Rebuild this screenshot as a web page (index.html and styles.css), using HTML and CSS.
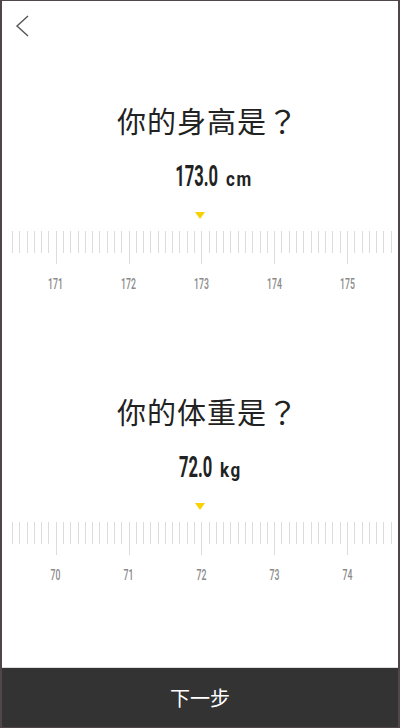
FILE: index.html
```html
<!DOCTYPE html>
<html>
<head>
    <meta charset="utf-8"/>
    <title>身体数据</title>

    <link rel="stylesheet" href="styles.css">
</head>
<body>

<div class="screen">
    <div class="header">
        <svg class="back" width="16" height="22" viewBox="0 0 16 22">
            <polyline points="13,1 2,11 13,21" fill="none" stroke="#555" stroke-width="1.4"/>
        </svg>
    </div>

    <div class="section">
        <div class="title">你的身高是<span class="mark">？</span></div>
        <div class="value"><span class="num">173.0</span><span class="unit">cm</span></div>
        <div class="pointer"></div>
        <div class="ruler" id="heightRuler"></div>
        <ul class="scale">
            <li>171</li>
            <li>172</li>
            <li>173</li>
            <li>174</li>
            <li>175</li>
        </ul>
    </div>

    <div class="section">
        <div class="title">你的体重是<span class="mark">？</span></div>
        <div class="value"><span class="num">72.0</span><span class="unit">kg</span></div>
        <div class="pointer"></div>
        <div class="ruler" id="weightRuler"></div>
        <ul class="scale">
            <li>70</li>
            <li>71</li>
            <li>72</li>
            <li>73</li>
            <li>74</li>
        </ul>
    </div>

    <div class="footer">下一步</div>
</div>

<script>
    // 刻度尺：每格 0.1，整数处为长刻度
    function drawTicks(id) {
        var ruler = document.getElementById(id);
        var html = '';
        for (var i = 0; i < 53; i++) {
            html += '<span class="tick' + (i % 10 == 6 ? ' major' : '') + '"></span>';
        }
        ruler.innerHTML = html;
    }

    drawTicks('heightRuler');
    drawTicks('weightRuler');
</script>
</body>
</html>
```

FILE: styles.css
```css
html, body {
    margin: 0;
    padding: 0;
}

body {
    background: #fff;
    font-family: "Noto Sans CJK SC", sans-serif;
}

.screen {
    width: 400px;
    height: 728px;
    box-sizing: border-box;
    border: 2px solid #4f4747;
    border-top-width: 1px;
    border-bottom-width: 1px;
    display: flex;
    flex-direction: column;
}

.header {
    height: 99px;
    box-sizing: border-box;
    padding: 14px 0 0 13px;
}

.back {
    display: block;
}

.section + .section {
    margin-top: 99px;
}

.title {
    font-size: 29px;
    line-height: 40px;
    letter-spacing: 1px;
    padding-left: 16px;
    text-align: center;
    color: #222;
}

.title .mark {
    font-family: "Noto Sans CJK JP", sans-serif;
    font-size: 31px;
}

.value {
    display: flex;
    justify-content: center;
    align-items: baseline;
    height: 30px;
    line-height: 30px;
    margin-top: 21px;
    color: #222;
    font-family: Roboto, sans-serif;
    font-weight: bold;
}

.num {
    display: inline-block;
    font-size: 29px;
    transform: scaleX(.57);
    transform-origin: right;
}

.unit {
    display: inline-block;
    font-size: 20px;
    letter-spacing: 2px;
    margin-left: 8px;
    transform: scaleX(.85);
    transform-origin: left;
}

.pointer {
    width: 0;
    height: 0;
    margin: 21px auto 0;
    border-left: 5px solid transparent;
    border-right: 5px solid transparent;
    border-top: 7px solid #f7d100;
}

.ruler {
    display: flex;
    justify-content: space-between;
    align-items: flex-start;
    width: 380px;
    height: 33px;
    margin: 12px 0 0 10px;
}

.tick {
    width: 1px;
    height: 22px;
    background: #dcdcdc;
}

.tick.major {
    height: 33px;
}

.scale {
    display: flex;
    list-style: none;
    padding: 0;
    margin: 12px 0 0 17px;
}

.scale li {
    width: 72.9px;
    text-align: center;
    font-family: Roboto, sans-serif;
    font-weight: 500;
    font-size: 14px;
    line-height: 16px;
    color: #8a8a8a;
    transform: scaleX(.62);
}

.footer {
    margin-top: auto;
    height: 59px;
    line-height: 59px;
    border-top: 1px solid #ddd;
    background: #333;
    color: #fff;
    text-align: center;
    font-size: 20px;
}
```
